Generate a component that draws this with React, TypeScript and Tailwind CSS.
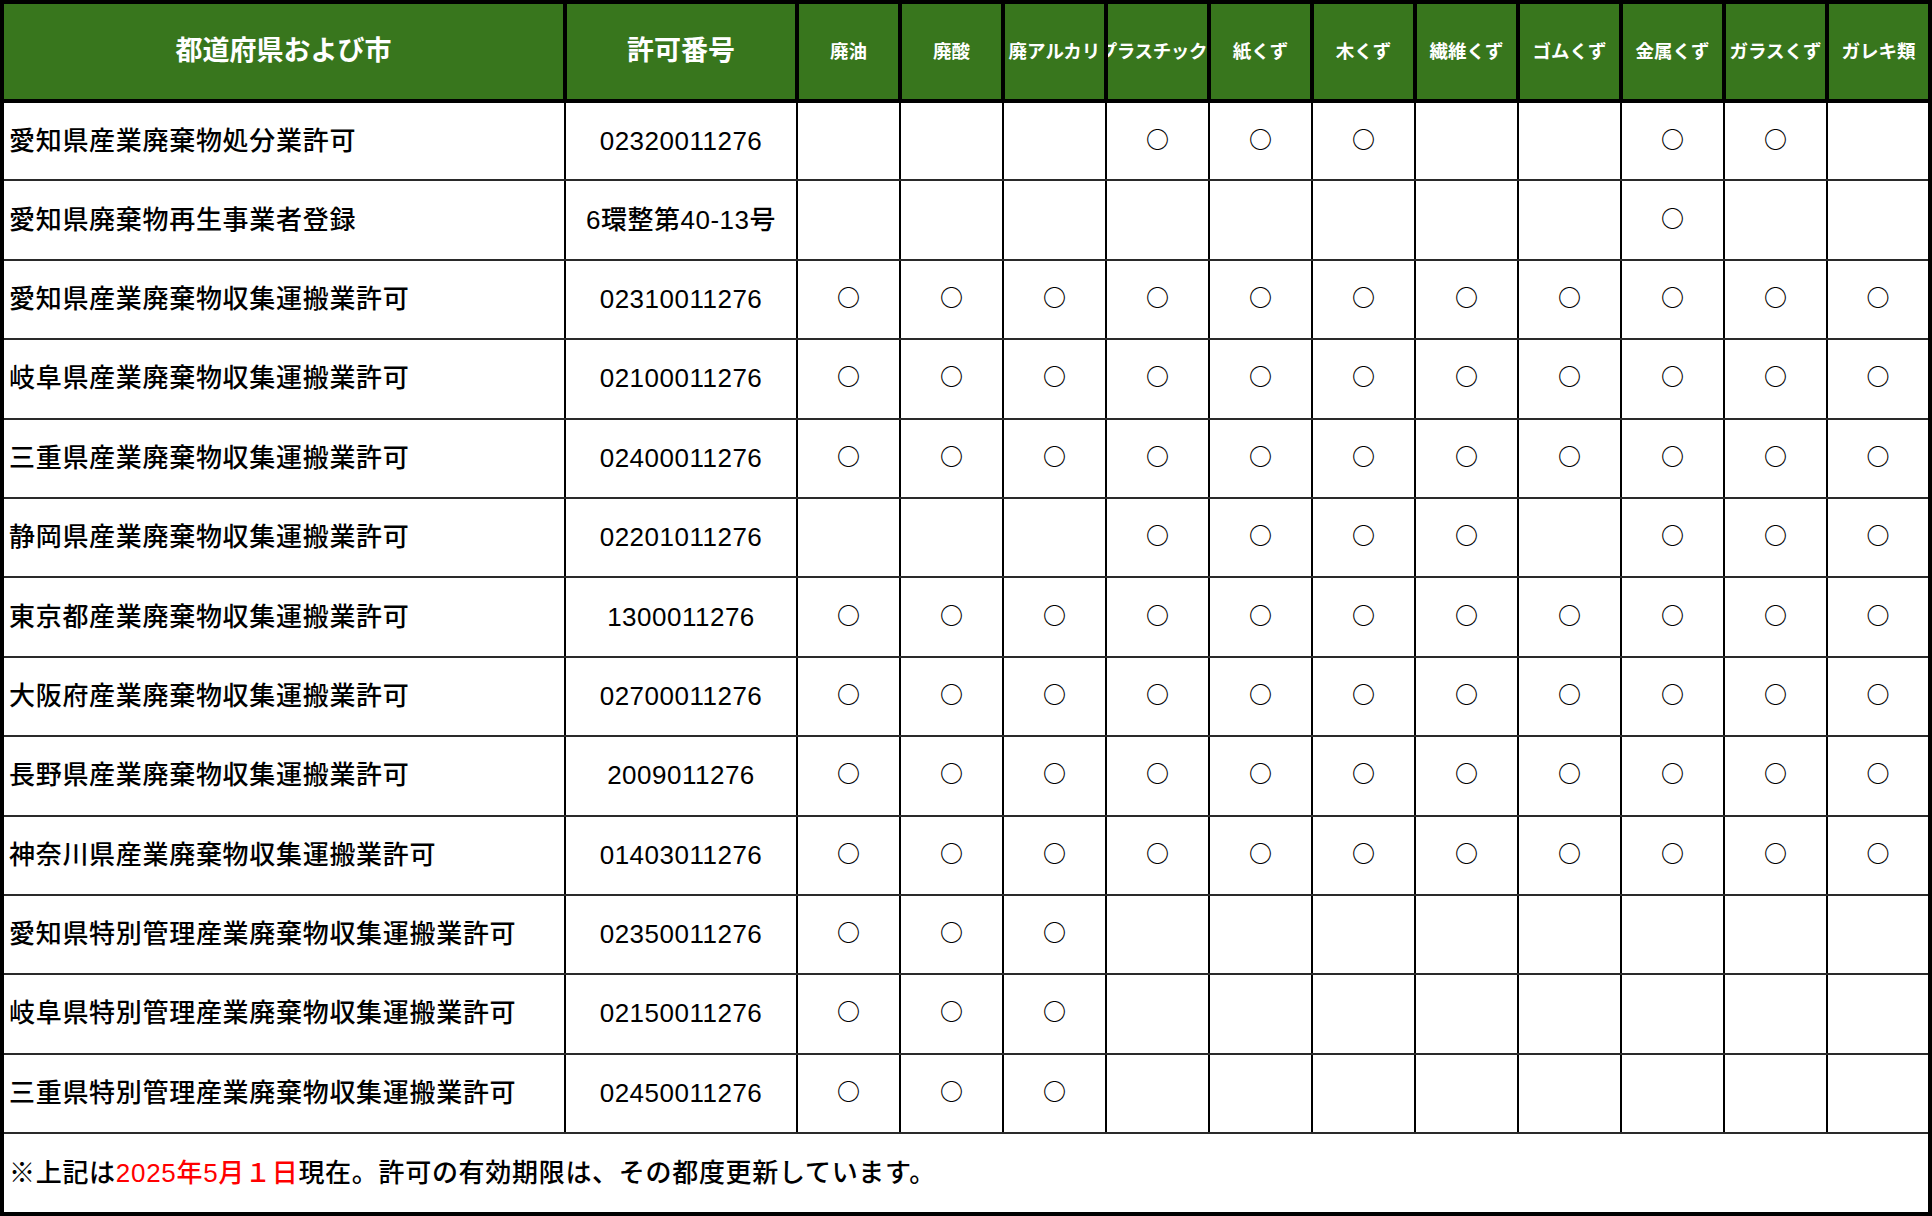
const cols = [
  "廃油",
  "廃酸",
  "廃アルカリ",
  "プラスチック",
  "紙くず",
  "木くず",
  "繊維くず",
  "ゴムくず",
  "金属くず",
  "ガラスくず",
  "ガレキ類",
];

// marks: 1 = ○ for each of the 11 waste columns
const rows: { name: string; no: string; marks: string }[] = [
  { name: "愛知県産業廃棄物処分業許可", no: "02320011276", marks: "00011100110" },
  { name: "愛知県廃棄物再生事業者登録", no: "6環整第40-13号", marks: "00000000100" },
  { name: "愛知県産業廃棄物収集運搬業許可", no: "02310011276", marks: "11111111111" },
  { name: "岐阜県産業廃棄物収集運搬業許可", no: "02100011276", marks: "11111111111" },
  { name: "三重県産業廃棄物収集運搬業許可", no: "02400011276", marks: "11111111111" },
  { name: "静岡県産業廃棄物収集運搬業許可", no: "02201011276", marks: "00011110111" },
  { name: "東京都産業廃棄物収集運搬業許可", no: "1300011276", marks: "11111111111" },
  { name: "大阪府産業廃棄物収集運搬業許可", no: "02700011276", marks: "11111111111" },
  { name: "長野県産業廃棄物収集運搬業許可", no: "2009011276", marks: "11111111111" },
  { name: "神奈川県産業廃棄物収集運搬業許可", no: "01403011276", marks: "11111111111" },
  { name: "愛知県特別管理産業廃棄物収集運搬業許可", no: "02350011276", marks: "11100000000" },
  { name: "岐阜県特別管理産業廃棄物収集運搬業許可", no: "02150011276", marks: "11100000000" },
  { name: "三重県特別管理産業廃棄物収集運搬業許可", no: "02450011276", marks: "11100000000" },
];

const cell = "border-2 border-black border-t-[#2a2a2a] border-b-[#2a2a2a]";

export default function App() {
  return (
    <div className="w-[1932px] h-[1216px] bg-white overflow-hidden font-['Liberation_Sans','Noto_Sans_CJK_JP',sans-serif] text-black">
      <table className="w-[1932px] h-[1216px] table-fixed border-collapse border-[4px] border-black">
        <colgroup>
          <col className="w-[563px]" />
          <col className="w-[232px]" />
          {cols.map((c) => (
            <col key={c} className="w-[103px]" />
          ))}
        </colgroup>
        <thead>
          <tr className="h-[99px] bg-[#38761d] text-white">
            <th className="border-[4px] border-black text-[27px] font-bold">都道府県および市</th>
            <th className="border-[4px] border-black text-[27px] font-bold">許可番号</th>
            {cols.map((c) => (
              <th key={c} className="border-[4px] border-black p-0">
                <div
                  className={`flex overflow-hidden whitespace-nowrap text-[18.5px] font-bold ${
                    c === "プラスチック" ? "justify-end tracking-[-0.4px]" : "justify-center"
                  }`}
                >
                  {c}
                </div>
              </th>
            ))}
          </tr>
        </thead>
        <tbody>
          {rows.map((r) => (
            <tr key={r.name} className="h-[79.4px]">
              <td className={`${cell} pl-[5px] text-[26px] tracking-[0.7px] font-medium whitespace-nowrap`}>
                {r.name}
              </td>
              <td className={`${cell} text-center text-[26px] tracking-[0.5px] font-medium whitespace-nowrap`}>
                {r.no}
              </td>
              {r.marks.split("").map((m, i) => (
                <td
                  key={i}
                  className={`${cell} pb-[6px] text-center font-['Noto_Sans_CJK_JP',sans-serif] text-[23px] font-bold leading-none`}
                >
                  {m === "1" ? "○" : ""}
                </td>
              ))}
            </tr>
          ))}
          <tr>
            <td colSpan={13} className="border-2 border-black pl-[5px] text-[26px] tracking-[0.7px] font-medium whitespace-nowrap">
              ※上記は<span className="text-[#ff0000]">2025年5月１日</span>現在。許可の有効期限は、その都度更新しています。
            </td>
          </tr>
        </tbody>
      </table>
    </div>
  );
}
